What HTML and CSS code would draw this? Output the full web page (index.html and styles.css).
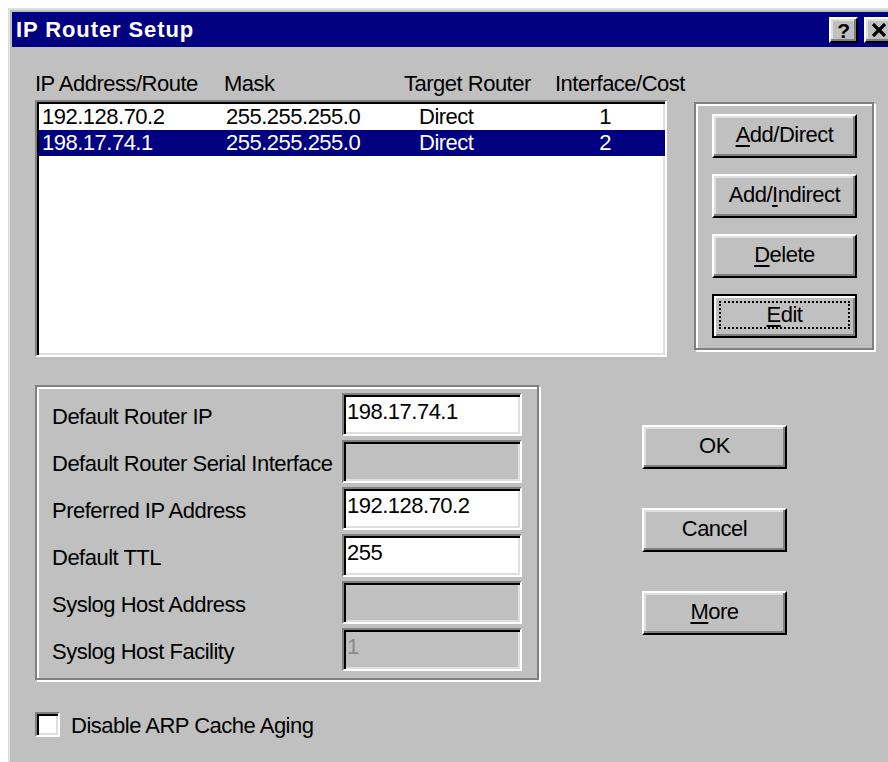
FILE: index.html
```html
<!DOCTYPE html>
<html lang="en">
<head>
<meta charset="utf-8">
<title>IP Router Setup</title>
<link rel="stylesheet" href="styles.css">
</head>
<body>
<div class="window">
  <div class="titlebar">
    <span class="title">IP Router Setup</span>
    <div class="tb-buttons">
      <button class="tb-btn help">?</button>
      <button class="tb-btn close" aria-label="Close">
        <svg width="16" height="14" viewBox="0 0 16 14"><path d="M2 1 L14 13 M14 1 L2 13" stroke="#000" stroke-width="3.2" fill="none"/></svg>
      </button>
    </div>
  </div>

  <div class="content">
    <div class="top">
      <div class="routes">
        <div class="head">
          <span>IP Address/Route</span>
          <span>Mask</span>
          <span>Target Router</span>
          <span>Interface/Cost</span>
        </div>
        <div class="listbox">
          <div class="row">
            <span>192.128.70.2</span>
            <span>255.255.255.0</span>
            <span>Direct</span>
            <span class="cost">1</span>
          </div>
          <div class="row selected">
            <span>198.17.74.1</span>
            <span>255.255.255.0</span>
            <span>Direct</span>
            <span class="cost">2</span>
          </div>
        </div>
      </div>

      <div class="group actions">
        <button class="btn"><u>A</u>dd/Direct</button>
        <button class="btn">Add/<u>I</u>ndirect</button>
        <button class="btn"><u>D</u>elete</button>
        <button class="btn default"><span class="focus"><u>E</u>dit</span></button>
      </div>
    </div>

    <div class="bottom">
      <div class="group settings">
        <span class="label">Default Router IP</span>
        <div class="field">198.17.74.1</div>
        <span class="label">Default Router Serial Interface</span>
        <div class="field disabled"></div>
        <span class="label">Preferred IP Address</span>
        <div class="field">192.128.70.2</div>
        <span class="label">Default TTL</span>
        <div class="field">255</div>
        <span class="label">Syslog Host Address</span>
        <div class="field disabled"></div>
        <span class="label">Syslog Host Facility</span>
        <div class="field disabled">1</div>
      </div>

      <div class="dialog-buttons">
        <button class="btn">OK</button>
        <button class="btn">Cancel</button>
        <button class="btn"><u>M</u>ore</button>
      </div>
    </div>

    <label class="check">
      <span class="box"></span>
      <span>Disable ARP Cache Aging</span>
    </label>
  </div>
</div>
</body>
</html>
```

FILE: styles.css
```css
html, body {
  margin: 0;
  height: 100%;
  overflow: hidden;
  background: #fff;
}

body {
  font-family: "Liberation Sans", Arial, sans-serif;
  font-size: 22px;
  letter-spacing: -0.5px;
  color: #000;
}

button {
  font: inherit;
  letter-spacing: inherit;
  color: #000;
  padding: 0;
  margin: 0;
  cursor: default;
}

u {
  text-decoration-thickness: 2px;
  text-underline-offset: 3px;
}

/* ---------- window frame ---------- */
.window {
  margin: 8px 0 0 8px;
  width: 893px;
  height: 790px;
  box-sizing: border-box;
  background: #c0c0c0;
  border: 2px solid;
  border-color: #dfdfdf #000 #000 #dfdfdf;
  padding: 2px;
}

.titlebar {
  height: 35px;
  background: #000080;
  color: #fff;
  display: flex;
  align-items: center;
  padding: 0 4px 0 4px;
}

.title {
  font-weight: bold;
  font-size: 22px;
  letter-spacing: 0.9px;
}

.tb-buttons {
  margin-left: auto;
  display: flex;
  gap: 6px;
}

.tb-btn {
  width: 29px;
  height: 26px;
  box-sizing: border-box;
  background: #c0c0c0;
  border: 2px solid;
  border-color: #fff #000 #000 #fff;
  box-shadow: inset -2px -2px #808080, inset 2px 2px #dfdfdf;
  display: flex;
  align-items: center;
  justify-content: center;
}

.tb-btn.help {
  font-weight: bold;
  font-size: 21px;
  line-height: 1;
  padding-top: 1px;
}

/* ---------- dialog body ---------- */
.content {
  padding: 25px 0 0 23px;
}

.top {
  display: flex;
  align-items: flex-start;
}

.routes {
  width: 632px;
}

.head {
  display: grid;
  grid-template-columns: 189px 180px 151px auto;
  line-height: 24px;
  height: 28px;
  white-space: nowrap;
}

.listbox {
  height: 257px;
  box-sizing: border-box;
  background: #fff;
  border: 2px solid;
  border-color: #808080 #fff #fff #808080;
  box-shadow: inset 2px 2px #000, inset -2px -2px #dfdfdf;
  padding: 2px 0 2px 2px;
}

.row {
  display: grid;
  grid-template-columns: 184px 193px 136px 100px;
  padding-left: 3px;
  height: 26px;
  line-height: 26px;
  white-space: nowrap;
}

.row.selected {
  background: #000080;
  color: #fff;
}

.row .cost {
  text-align: center;
}

/* etched group box */
.group {
  box-sizing: border-box;
  border: 2px solid #808080;
  box-shadow: inset 2px 2px #fff, 2px 2px #fff;
}

.actions {
  width: 180px;
  height: 248px;
  margin: 30px 0 0 27px;
  padding: 10px 0 0 16px;
  display: flex;
  flex-direction: column;
  gap: 16px;
}

/* push buttons */
.btn {
  width: 145px;
  height: 44px;
  box-sizing: border-box;
  background: #c0c0c0;
  border: 2px solid;
  border-color: #fff #000 #000 #fff;
  box-shadow: inset -2px -2px #808080, inset 2px 2px #dfdfdf;
  display: flex;
  align-items: center;
  justify-content: center;
  line-height: 24px;
  padding-bottom: 2px;
}

.btn.default {
  border-color: #000;
  box-shadow: inset 2px 2px #fff, inset -2px -2px #808080;
  padding: 5px 5px 7px 5px;
  align-items: stretch;
}

.btn.default .focus {
  flex: 1;
  border: 2px dotted #000;
  display: flex;
  align-items: center;
  justify-content: center;
}

/* lower section */
.bottom {
  display: flex;
  align-items: flex-start;
  margin-top: 28px;
}

.settings {
  width: 504px;
  height: 295px;
  padding: 6px 15px 0 15px;
  display: grid;
  grid-template-columns: 1fr 180px;
  grid-auto-rows: 43px;
  row-gap: 4px;
  align-content: start;
}

.label {
  align-self: center;
  padding-top: 4px;
  white-space: nowrap;
}

.field {
  box-sizing: border-box;
  background: #fff;
  border: 2px solid;
  border-color: #808080 #fff #fff #808080;
  box-shadow: inset 2px 2px #000, inset -2px -2px #dfdfdf;
  padding: 5px 3px;
  line-height: 24px;
  white-space: nowrap;
}

.field.disabled {
  background: #c0c0c0;
  color: #8c8c8c;
}

.dialog-buttons {
  margin-left: 103px;
  padding-top: 40px;
  display: flex;
  flex-direction: column;
  gap: 39px;
}

/* checkbox */
.check {
  display: flex;
  align-items: center;
  gap: 11px;
  margin-top: 30px;
}

.check .box {
  width: 25px;
  height: 25px;
  box-sizing: border-box;
  background: #fff;
  border: 2px solid;
  border-color: #808080 #fff #fff #808080;
  box-shadow: inset 2px 2px #000, inset -2px -2px #dfdfdf;
}

.check span:last-child {
  padding-top: 3px;
}
```
